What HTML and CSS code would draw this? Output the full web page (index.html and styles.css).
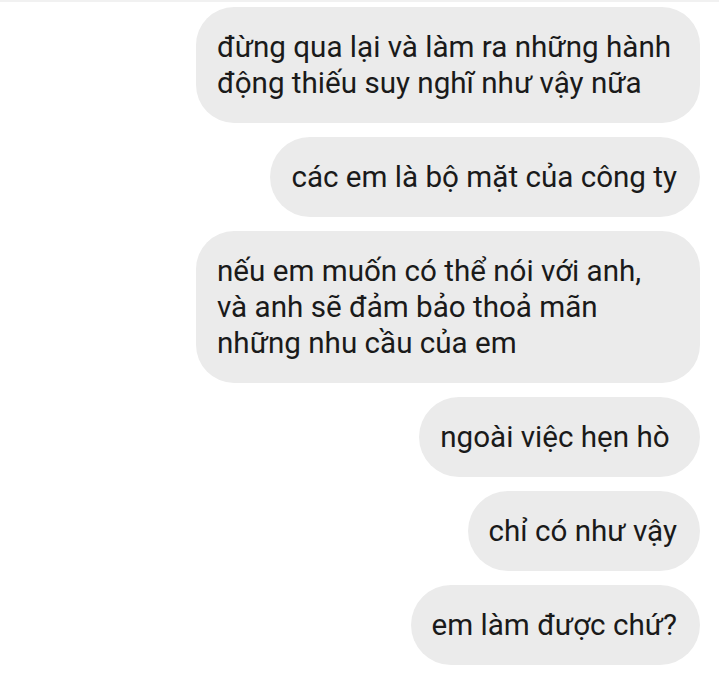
FILE: index.html
```html
<!DOCTYPE html>
<html lang="vi">
<head>
<meta charset="utf-8">
<title>Chat</title>
<link rel="stylesheet" href="styles.css">
</head>
<body>
<div class="topline"></div>
<main class="thread">
  <div class="bubble wide">đừng qua lại và làm ra những hành<br>động thiếu suy nghĩ như vậy nữa</div>
  <div class="bubble">các em là bộ mặt của công ty</div>
  <div class="bubble wide">nếu em muốn có thể nói với anh,<br>và anh sẽ đảm bảo thoả mãn<br>những nhu cầu của em</div>
  <div class="bubble">ngoài việc hẹn hò&nbsp;</div>
  <div class="bubble">chỉ có như vậy</div>
  <div class="bubble">em làm được chứ?</div>
</main>
</body>
</html>
```
FILE: styles.css
```css
html, body {
  margin: 0;
  padding: 0;
  background: #ffffff;
}
body {
  width: 719px;
  height: 674px;
  overflow: hidden;
  font-family: Roboto, "Noto Sans", "Liberation Sans", sans-serif;
}
.topline {
  height: 2px;
  background: #f1f1f1;
}
.thread {
  display: flex;
  flex-direction: column;
  align-items: flex-end;
  gap: 14px;
  padding: 5px 19px 0 0;
}
.bubble {
  background: #ebebeb;
  color: #1a1a1a;
  font-size: 29.6px;
  line-height: 36px;
  padding: 22px 23px 22px 21px;
  border-radius: 40px;
  white-space: nowrap;
}
.wide {
  width: 460px;
  border-radius: 38px;
}
```
